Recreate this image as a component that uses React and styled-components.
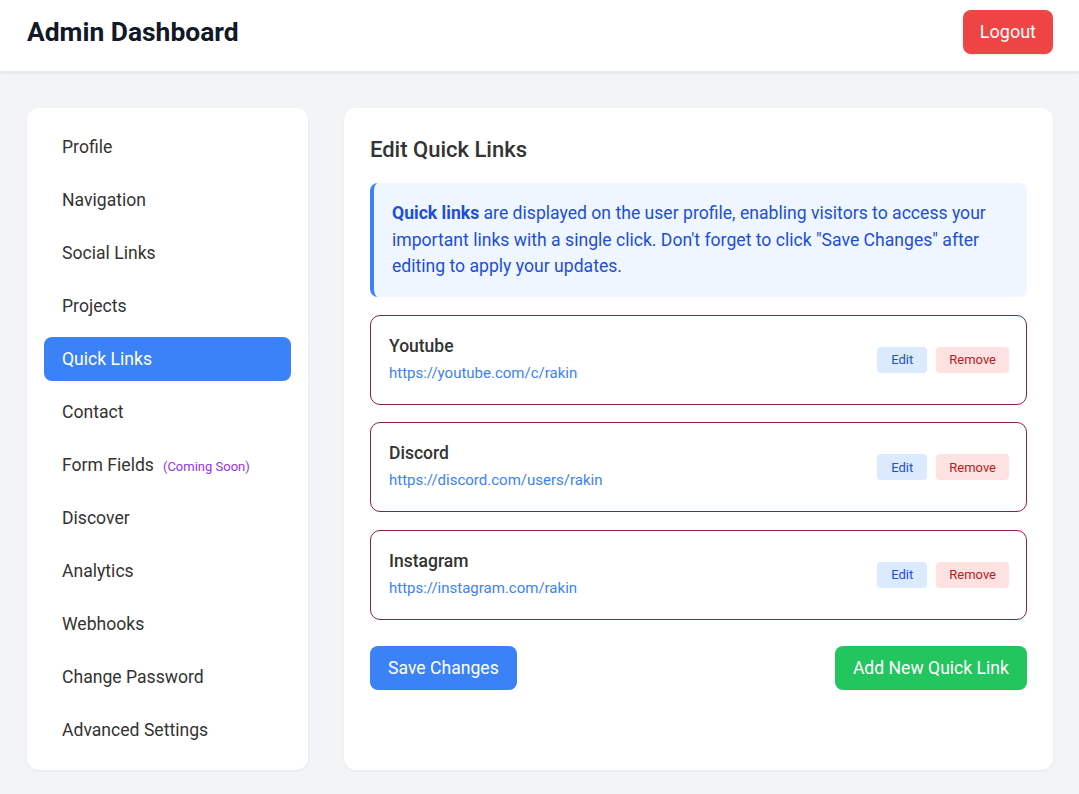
import React from "react";
import styled, { createGlobalStyle } from "styled-components";

const Global = createGlobalStyle`
  * { box-sizing: border-box; }
  body {
    margin: 0;
    font-family: Roboto, "Liberation Sans", Arial, sans-serif;
    background: #f3f4f6;
    color: #333;
  }
  button { font-family: inherit; }
`;

const Header = styled.header`
  height: 72px;
  background: #fff;
  display: flex;
  align-items: center;
  justify-content: space-between;
  padding: 0 26px 8px 27px;
  box-shadow: 0 1px 3px rgba(0, 0, 0, 0.08);
  border-bottom: 1px solid #e8e9ec;
`;

const Title = styled.h1`
  margin: 0;
  font-size: 26.4px;
  font-weight: 700;
  color: #111827;
`;

const LogoutButton = styled.button`
  height: 44px;
  padding: 0 17px;
  border: none;
  border-radius: 8px;
  background: #ef4444;
  color: #fff;
  font-size: 18px;
  box-shadow: 0 1px 2px rgba(0, 0, 0, 0.1);
`;

const Layout = styled.div`
  display: grid;
  grid-template-columns: 281px 1fr;
  gap: 36px;
  padding: 36px 26px 25px 27px;
`;

const Card = styled.div`
  background: #fff;
  border-radius: 12px;
  box-shadow: 0 1px 3px rgba(0, 0, 0, 0.06);
`;

const Sidebar = styled(Card)`
  padding: 17px 17px 18px;
  display: flex;
  flex-direction: column;
  gap: 9px;
`;

const NavItem = styled.div`
  height: 44px;
  display: flex;
  align-items: center;
  padding-left: 18px;
  border-radius: 8px;
  font-size: 17.6px;
  color: ${(p) => (p.$active ? "#fff" : "#333")};
  background: ${(p) => (p.$active ? "#3b82f6" : "transparent")};
`;

const Soon = styled.span`
  font-size: 13px;
  color: #9333ea;
  margin-left: 9px;
  margin-top: 3px;
`;

const Main = styled(Card)`
  padding: 26px;
  display: flex;
  flex-direction: column;
`;

const SectionTitle = styled.h2`
  margin: 0 0 18px;
  font-size: 22px;
  font-weight: 500;
  color: #333;
  line-height: 30px;
  padding-top: 1px;
`;

const InfoBox = styled.div`
  background: #eff6ff;
  border-left: 4px solid #3b82f6;
  border-radius: 8px;
  padding: 17px 18px 17px;
  color: #1d4ed8;
  font-size: 17.6px;
  line-height: 26.5px;
  strong { font-weight: 700; }
`;

const LinkList = styled.div`
  display: flex;
  flex-direction: column;
  gap: 17.5px;
  margin-top: 18px;
`;

const LinkCard = styled.div`
  height: 90px;
  border: 1px solid #8a2244;
  border-radius: 10px;
  display: flex;
  align-items: center;
  justify-content: space-between;
  padding: 0 17px 0 18px;
`;

const LinkInfo = styled.div`
  display: flex;
  flex-direction: column;
  gap: 8px;
  margin-top: -2px;
`;

const LinkName = styled.div`
  font-size: 17.5px;
  font-weight: 500;
  color: #333;
`;

const LinkUrl = styled.div`
  font-size: 15px;
  color: #3b82f6;
`;

const Actions = styled.div`
  display: flex;
  gap: 9px;
`;

const SmallButton = styled.button`
  height: 26px;
  padding: 0 ${(p) => (p.$danger ? "13px" : "14px")};
  border: none;
  border-radius: 4px;
  font-size: 13px;
  background: ${(p) => (p.$danger ? "#fee2e2" : "#dbeafe")};
  color: ${(p) => (p.$danger ? "#b91c1c" : "#1d4ed8")};
`;

const Footer = styled.div`
  display: flex;
  justify-content: space-between;
  margin-top: 26px;
  margin-bottom: 52px;
`;

const BigButton = styled.button`
  height: 44px;
  padding: 0 18px;
  border: none;
  border-radius: 8px;
  font-size: 17.6px;
  color: #fff;
  background: ${(p) => p.$bg};
`;

const navItems = [
  "Profile",
  "Navigation",
  "Social Links",
  "Projects",
  "Quick Links",
  "Contact",
  "Form Fields",
  "Discover",
  "Analytics",
  "Webhooks",
  "Change Password",
  "Advanced Settings",
];

const links = [
  { name: "Youtube", url: "https://youtube.com/c/rakin" },
  { name: "Discord", url: "https://discord.com/users/rakin" },
  { name: "Instagram", url: "https://instagram.com/rakin" },
];

export default function App() {
  return (
    <>
      <Global />
      <Header>
        <Title>Admin Dashboard</Title>
        <LogoutButton>Logout</LogoutButton>
      </Header>
      <Layout>
        <Sidebar>
          {navItems.map((item) => (
            <NavItem key={item} $active={item === "Quick Links"}>
              {item}
              {item === "Form Fields" && <Soon>(Coming Soon)</Soon>}
            </NavItem>
          ))}
        </Sidebar>
        <Main>
          <SectionTitle>Edit Quick Links</SectionTitle>
          <InfoBox>
            <strong>Quick links</strong> are displayed on the user profile,
            enabling visitors to access your important links with a single
            click. Don't forget to click "Save Changes" after editing to apply
            your updates.
          </InfoBox>
          <LinkList>
            {links.map((l) => (
              <LinkCard key={l.name}>
                <LinkInfo>
                  <LinkName>{l.name}</LinkName>
                  <LinkUrl>{l.url}</LinkUrl>
                </LinkInfo>
                <Actions>
                  <SmallButton>Edit</SmallButton>
                  <SmallButton $danger>Remove</SmallButton>
                </Actions>
              </LinkCard>
            ))}
          </LinkList>
          <Footer>
            <BigButton $bg="#3b82f6">Save Changes</BigButton>
            <BigButton $bg="#22c55e">Add New Quick Link</BigButton>
          </Footer>
        </Main>
      </Layout>
    </>
  );
}
